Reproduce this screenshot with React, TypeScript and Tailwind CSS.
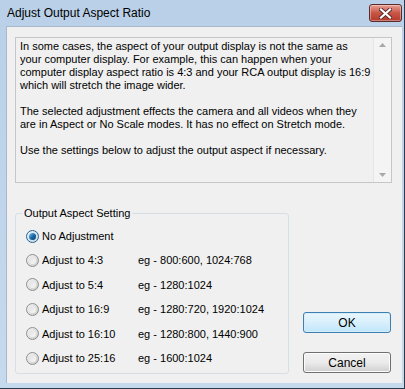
import React from "react";

const font = { fontFamily: '"Liberation Sans", Arial, sans-serif' };

function Radio({ checked }: { checked?: boolean }) {
  return (
    <div
      className={
        "w-[13px] h-[13px] rounded-full border flex items-center justify-center " +
        (checked
          ? "border-[#2c628b] bg-gradient-to-br from-[#e6f3fb] to-[#bfd9ec]"
          : "border-[#8e8f8f] bg-gradient-to-br from-[#f4f4f4] to-[#cbcbcb]")
      }
    >
      {checked ? (
        <div className="w-[7px] h-[7px] rounded-full bg-gradient-to-br from-[#7dc3ef] via-[#1a6ca8] to-[#0d3d66]" />
      ) : (
        <div className="w-[7px] h-[7px] rounded-full bg-gradient-to-br from-[#e0e0e0] to-[#f8f8f8]" />
      )}
    </div>
  );
}

const rows: [string, string, boolean][] = [
  ["No Adjustment", "", true],
  ["Adjust to 4:3", "eg - 800:600, 1024:768", false],
  ["Adjust to 5:4", "eg - 1280:1024", false],
  ["Adjust to 16:9", "eg - 1280:720, 1920:1024", false],
  ["Adjust to 16:10", "eg - 1280:800, 1440:900", false],
  ["Adjust to 25:16", "eg - 1600:1024", false],
];

export default function App() {
  return (
    <div
      className="w-[405px] h-[389px] relative flex flex-col bg-gradient-to-b from-[#b9d0e8] to-[#c6daee] border-r border-b border-[#2a3b4d] overflow-hidden text-black"
      style={font}
    >
      {/* Title bar */}
      <div className="h-[26px] flex items-start justify-between pl-[7px] pr-[2px]">
        <div className="text-[12px] leading-[26px] text-black">Adjust Output Aspect Ratio</div>
        <div className="mt-[4px] w-[33px] h-[18px] rounded-[3px] border border-[#5b2a2a] bg-gradient-to-b from-[#e8a093] via-[#c75546] to-[#b53a2b] flex items-center justify-center shadow-[inset_0_0_0_1px_rgba(255,255,255,0.35)]">
          <svg width="13" height="11" viewBox="0 0 13 11">
            <path
              d="M2 1.5 L11 9.5 M11 1.5 L2 9.5"
              stroke="#5a2a2a"
              strokeWidth="4"
              strokeLinecap="square"
            />
            <path
              d="M2 1.5 L11 9.5 M11 1.5 L2 9.5"
              stroke="#ffffff"
              strokeWidth="2.2"
              strokeLinecap="square"
            />
          </svg>
        </div>
      </div>

      {/* Client area */}
      <div className="ml-[6px] mr-[2px] mb-[5px] flex-1 bg-[#f0f0f0] border-l border-t border-[#a9b8c8] pt-[10px] pl-[8px] pr-[9px] flex flex-col">
        {/* Text box */}
        <div className="w-[377px] h-[146px] border border-[#c4c6c9] bg-[#f0f0f0] flex">
          <div className="flex-1 pl-[4px] pt-[2px] text-[11px] leading-[13px]">
            <div>In some cases, the aspect of your output display is not the same as</div>
            <div>your computer display. For example, this can happen when your</div>
            <div>computer display aspect ratio is 4:3 and your RCA output display is 16:9</div>
            <div>which will stretch the image wider.</div>
            <div className="h-[13px]" />
            <div>The selected adjustment effects the camera and all videos when they</div>
            <div>are in Aspect or No Scale modes. It has no effect on Stretch mode.</div>
            <div className="h-[13px]" />
            <div>Use the settings below to adjust the output aspect if necessary.</div>
          </div>
          <div className="w-[18px] border-l border-[#e6e6e6] bg-[#f4f4f4] flex flex-col justify-between items-center py-[5px]">
            <svg width="7" height="4" viewBox="0 0 7 4">
              <path d="M0 4 L3.5 0 L7 4 Z" fill="#a8a8a8" />
            </svg>
            <svg width="7" height="4" viewBox="0 0 7 4">
              <path d="M0 0 L3.5 4 L7 0 Z" fill="#a8a8a8" />
            </svg>
          </div>
        </div>

        {/* Bottom row */}
        <div className="mt-[30px] flex items-end">
          <div className="relative w-[274px] h-[161px] border border-[#d5dfe5] rounded-[3px] pt-[10px] pl-[10px]">
            <div className="absolute left-[6px] top-[-8px] px-[2px] bg-[#f0f0f0] text-[11px] leading-[14px]">
              Output Aspect Setting
            </div>
            {rows.map(([label, eg, checked]) => (
              <div key={label} className="h-[24.4px] flex items-center text-[11px]">
                <Radio checked={checked} />
                <div className="ml-[3px] w-[96px]">{label}</div>
                <div>{eg}</div>
              </div>
            ))}
          </div>
          <div className="ml-[14px] flex flex-col gap-[19px] mb-[1px]">
            <div className="w-[88px] h-[21px] rounded-[3px] border border-[#3c7fb1] bg-gradient-to-b from-[#eaf6fd] via-[#d9f0fc] to-[#bee6fd] shadow-[inset_0_0_0_1px_#d6ecf7] flex items-center justify-center text-[12px]">
              OK
            </div>
            <div className="w-[88px] h-[21px] rounded-[3px] border border-[#707070] bg-gradient-to-b from-[#f2f2f2] via-[#ebebeb] to-[#cfcfcf] shadow-[inset_0_0_0_1px_#fcfcfc] flex items-center justify-center text-[12px]">
              Cancel
            </div>
          </div>
        </div>
      </div>
    </div>
  );
}
